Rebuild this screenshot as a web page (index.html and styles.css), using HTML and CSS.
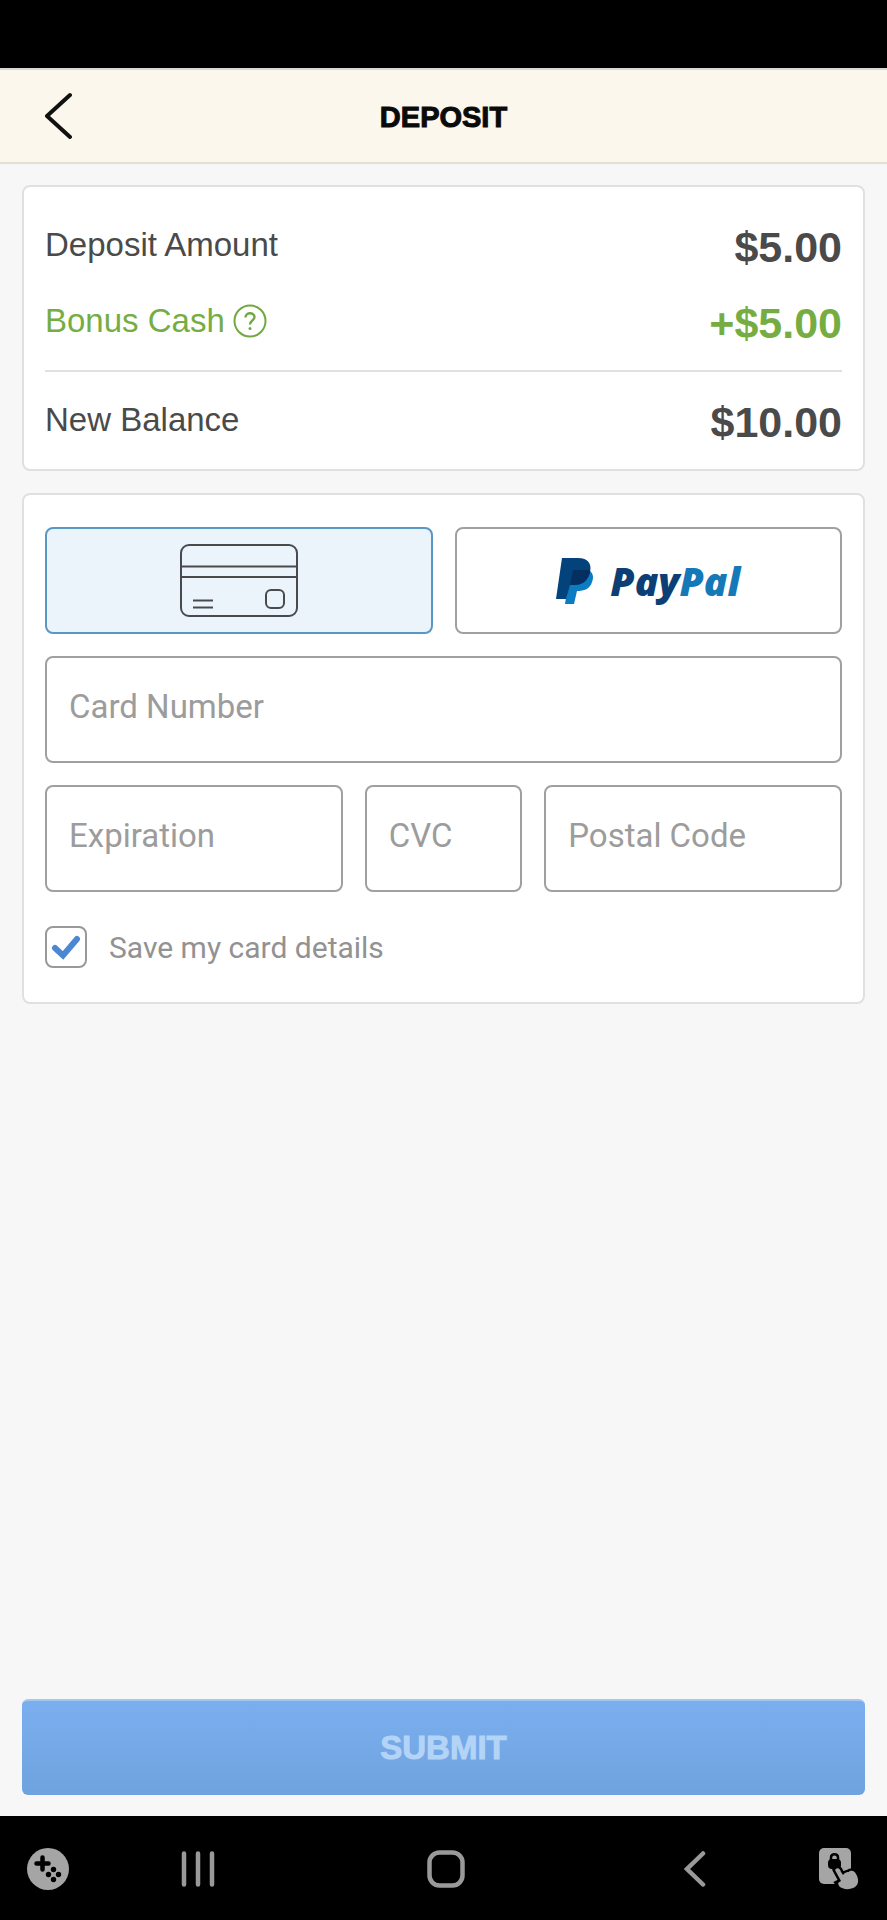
FILE: index.html
```html
<!DOCTYPE html>
<html lang="en">
<head>
  <meta charset="UTF-8">
  <meta name="viewport" content="width=device-width, initial-scale=1">
  <title>Deposit</title>
  <link rel="stylesheet" href="styles.css">
</head>
<body>

  <div class="status-bar"></div>

  <header class="header">
    <button type="button" class="back-btn" aria-label="Back">
      <svg width="28" height="48" viewBox="0 0 28 48"><path d="M26 3L3 24L26 45" fill="none" stroke="#111" stroke-width="4" stroke-linecap="round" stroke-linejoin="round"/></svg>
    </button>
    <h1>DEPOSIT</h1>
  </header>

  <form class="content">

    <section class="card summary">
      <div class="row">
        <span class="label">Deposit Amount</span>
        <span class="amount">$5.00</span>
      </div>
      <div class="row bonus">
        <span class="label">Bonus Cash
          <button type="button" class="help-btn" aria-label="About bonus cash">
            <svg width="34" height="34" viewBox="0 0 34 34" fill="none" stroke="#72a841" stroke-width="2"><circle cx="17" cy="17" r="15.500"/><path d="M12.500 13.500C12.500 8 21.500 8 21.500 13C21.500 16.500 17 16.500 17 20.500" stroke-width="2.400"/><circle cx="17" cy="24.500" r="1.500" fill="#72a841" stroke="none"/></svg>
          </button>
        </span>
        <span class="amount">+$5.00</span>
      </div>
      <hr>
      <div class="row">
        <span class="label">New Balance</span>
        <span class="amount">$10.00</span>
      </div>
    </section>

    <section class="card payment">
      <div class="methods">
        <button type="button" class="method selected" aria-label="Credit card">
          <svg width="120" height="76" viewBox="0 0 120 76" fill="none" stroke="#4a4a4d" stroke-width="2">
            <rect x="2" y="2" width="116" height="71" rx="8"/>
            <path d="M2 23.500H118M2 34H118M14 57.500H34M14 64.500H34"/>
            <rect x="87" y="47" width="18" height="18" rx="5"/>
          </svg>
        </button>
        <button type="button" class="method">
          <svg width="38" height="48" viewBox="0 0 38 48">
            <path d="M12 13H33C37 16 38 20 36 25C34 32 28 34 21 34L18 47H9L12 28Z" fill="#0b7cc1"/>
            <path d="M6 1H22C32 1 36 7 34 15C32 24 26 28 18 28H14L10 42H0Z" fill="#04427c"/>
            <path d="M17 13H34V15C32 24 26 28 18 28H14Z" fill="#062f61"/>
          </svg>
          <span class="wordmark">Pay<span>Pal</span></span>
        </button>
      </div>

      <input type="text" class="field" placeholder="Card Number" aria-label="Card Number">

      <div class="fields">
        <input type="text" class="field" placeholder="Expiration" aria-label="Expiration">
        <input type="text" class="field" placeholder="CVC" aria-label="CVC">
        <input type="text" class="field" placeholder="Postal Code" aria-label="Postal Code">
      </div>

      <div class="save">
        <div class="check">
          <input type="checkbox" id="saveCard" checked>
          <svg width="42" height="42" viewBox="0 0 42 42"><path d="M10 22L18 29.500L32 13" fill="none" stroke="#4b87d2" stroke-width="6" stroke-linecap="round"/></svg>
        </div>
        <label for="saveCard">Save my card details</label>
      </div>
    </section>

    <button type="submit" class="submit-btn">SUBMIT</button>
  </form>

  <nav class="nav-bar">
    <button type="button" class="side-left" aria-label="Game tools">
      <svg width="42" height="42" viewBox="0 0 42 42"><circle cx="21" cy="21" r="21" fill="#a5a5a5"/><path d="M15.500 9.500V21.500M9.500 15.500H21.500" stroke="#000" stroke-width="4.500" stroke-linecap="round"/><circle cx="26.500" cy="21.500" r="2.700"/><circle cx="21.500" cy="26.500" r="2.700"/><circle cx="31.500" cy="26.500" r="2.700"/><circle cx="26.500" cy="31.500" r="2.700"/></svg>
    </button>
    <button type="button" aria-label="Recent apps">
      <svg width="34" height="36" viewBox="0 0 34 36"><path d="M3 2.500V33.500M17 2.500V33.500M31 2.500V33.500" stroke="#999" stroke-width="4.500" stroke-linecap="round"/></svg>
    </button>
    <button type="button" aria-label="Home">
      <svg width="38" height="38" viewBox="0 0 38 38"><rect x="2.500" y="2.500" width="33" height="33" rx="10" fill="none" stroke="#999" stroke-width="4.500"/></svg>
    </button>
    <button type="button" aria-label="Back">
      <svg width="22" height="36" viewBox="0 0 22 36"><path d="M19 2.500L3 18L19 33.500" fill="none" stroke="#999" stroke-width="4.500" stroke-linecap="round"/></svg>
    </button>
    <button type="button" class="side-right" aria-label="Touch lock">
      <svg width="40" height="42" viewBox="0 0 40 42">
        <rect x="0" y="0" width="32" height="36" rx="5" fill="#a5a5a5"/>
        <rect x="9" y="11" width="13" height="10" rx="4"/>
        <path d="M12 12V9.500C12 5 19 5 19 9.500V12" fill="none" stroke="#000" stroke-width="2.500"/>
        <path d="M16 22C18 19 21 20 22 24L24 27C27 23 29 25 31 23C34 22 36 24 37 26C40 31 40 36 36 39C31 42 24 42 20 38L18 35L22 33Z" fill="#a5a5a5" stroke="#000" stroke-width="5"/>
        <path d="M16 22C18 19 21 20 22 24L24 27C27 23 29 25 31 23C34 22 36 24 37 26C40 31 40 36 36 39C31 42 24 42 20 38L19 35L22 33Z" fill="#a5a5a5"/>
      </svg>
    </button>
  </nav>

</body>
</html>
```
FILE: styles.css
```css
* {
  box-sizing: border-box;
}

body {
  margin: 0;
  min-height: 100vh;
  display: flex;
  flex-direction: column;
  background-color: #f7f7f7;
  font-family: "Liberation Sans", Arial, sans-serif;
  color: #4a4a4a;
}

button {
  padding: 0;
  border: none;
  background: none;
  cursor: pointer;
}

svg {
  display: block;
}

.status-bar {
  height: 68px;
  background: #000;
}

.header {
  display: grid;
  grid-template-columns: 1fr auto 1fr;
  align-items: center;
  height: 96px;
  padding: 0 44px;
  background-color: #fbf7ed;
  border-top: 2px solid #d8d8d8;
  border-bottom: 2px solid #e3e0d2;
}

.header h1 {
  margin: 0;
  padding-top: 2px;
  color: #0a0a0a;
  font-size: 29px;
  line-height: 40px;
  -webkit-text-stroke: 1px;
}

.back-btn {
  justify-self: start;
}

.content {
  flex: 1;
  display: flex;
  flex-direction: column;
  gap: 22px;
  padding: 21px 22px;
}

.card {
  padding: 0 21px;
  background: #fff;
  border: 2px solid #e0e0e0;
  border-radius: 8px;
}

.summary {
  padding-top: 22px;
  padding-bottom: 9px;
}

.row {
  display: flex;
  justify-content: space-between;
  align-items: center;
  height: 76px;
}

.label {
  display: flex;
  align-items: center;
  gap: 8px;
  padding-bottom: 4px;
  font-size: 33px;
}

.amount {
  font-size: 43px;
  font-weight: bold;
}

.bonus {
  color: #76ad43;
}

.summary hr {
  height: 2px;
  margin: 9px 0 12px;
  border: none;
  background: #e0e0e0;
}

.payment {
  display: flex;
  flex-direction: column;
  gap: 22px;
  padding-top: 32px;
  padding-bottom: 33px;
}

.methods {
  display: grid;
  grid-template-columns: 1fr 1fr;
  gap: 22px;
}

.method {
  display: flex;
  justify-content: center;
  align-items: center;
  gap: 16px;
  height: 107px;
  border: 2px solid #a0a0a0;
  border-radius: 8px;
}

.method.selected {
  background-color: #ebf4fb;
  border-color: #5b97c4;
}

.wordmark {
  color: #0b3f75;
  font-family: "Open Sans", sans-serif;
  font-size: 39px;
  font-style: italic;
  font-weight: 800;
}

.wordmark span {
  color: #1579b8;
}

.fields {
  display: grid;
  grid-template-columns: 297fr 157fr 297fr;
  gap: 22px;
}

.field {
  width: 100%;
  min-width: 0;
  height: 107px;
  padding: 0 22px 6px;
  border: 2px solid #a0a0a0;
  border-radius: 8px;
  background: #fff;
  color: #4a4a4a;
  font-family: Roboto, sans-serif;
  font-size: 33px;
}

.field::placeholder {
  color: #9c9c9c;
}

.save {
  display: flex;
  align-items: center;
  gap: 22px;
  margin-top: 11px;
  color: #929292;
  font-family: Roboto, sans-serif;
  font-size: 30px;
  line-height: 42px;
}

.save label {
  padding-top: 2px;
}

.check {
  position: relative;
}

.check input {
  appearance: none;
  display: block;
  width: 42px;
  height: 42px;
  margin: 0;
  border: 2px solid #999;
  border-radius: 8px;
}

/* tick lies over the box */
.check svg {
  position: absolute;
  top: 0;
  left: 0;
  pointer-events: none;
}

.check input:not(:checked) + svg {
  display: none;
}

.submit-btn {
  height: 96px;
  margin-top: auto;
  border-top: 2px solid #a3c8f2;
  border-radius: 6px;
  background: linear-gradient(#7aaeee, #6fa3df);
  color: #b4d4f7;
  font-family: "Liberation Sans", Arial, sans-serif;
  font-size: 33px;
  font-weight: bold;
  -webkit-text-stroke: 1px;
}

.nav-bar {
  display: grid;
  grid-template-columns: 74px 1fr 1fr 1fr 68px;
  justify-items: center;
  align-items: center;
  height: 104px;
  padding-top: 2px;
  background: #000;
}

.side-left {
  justify-self: start;
  padding-left: 27px;
}

.side-right {
  justify-self: end;
  padding-right: 28px;
}
```
